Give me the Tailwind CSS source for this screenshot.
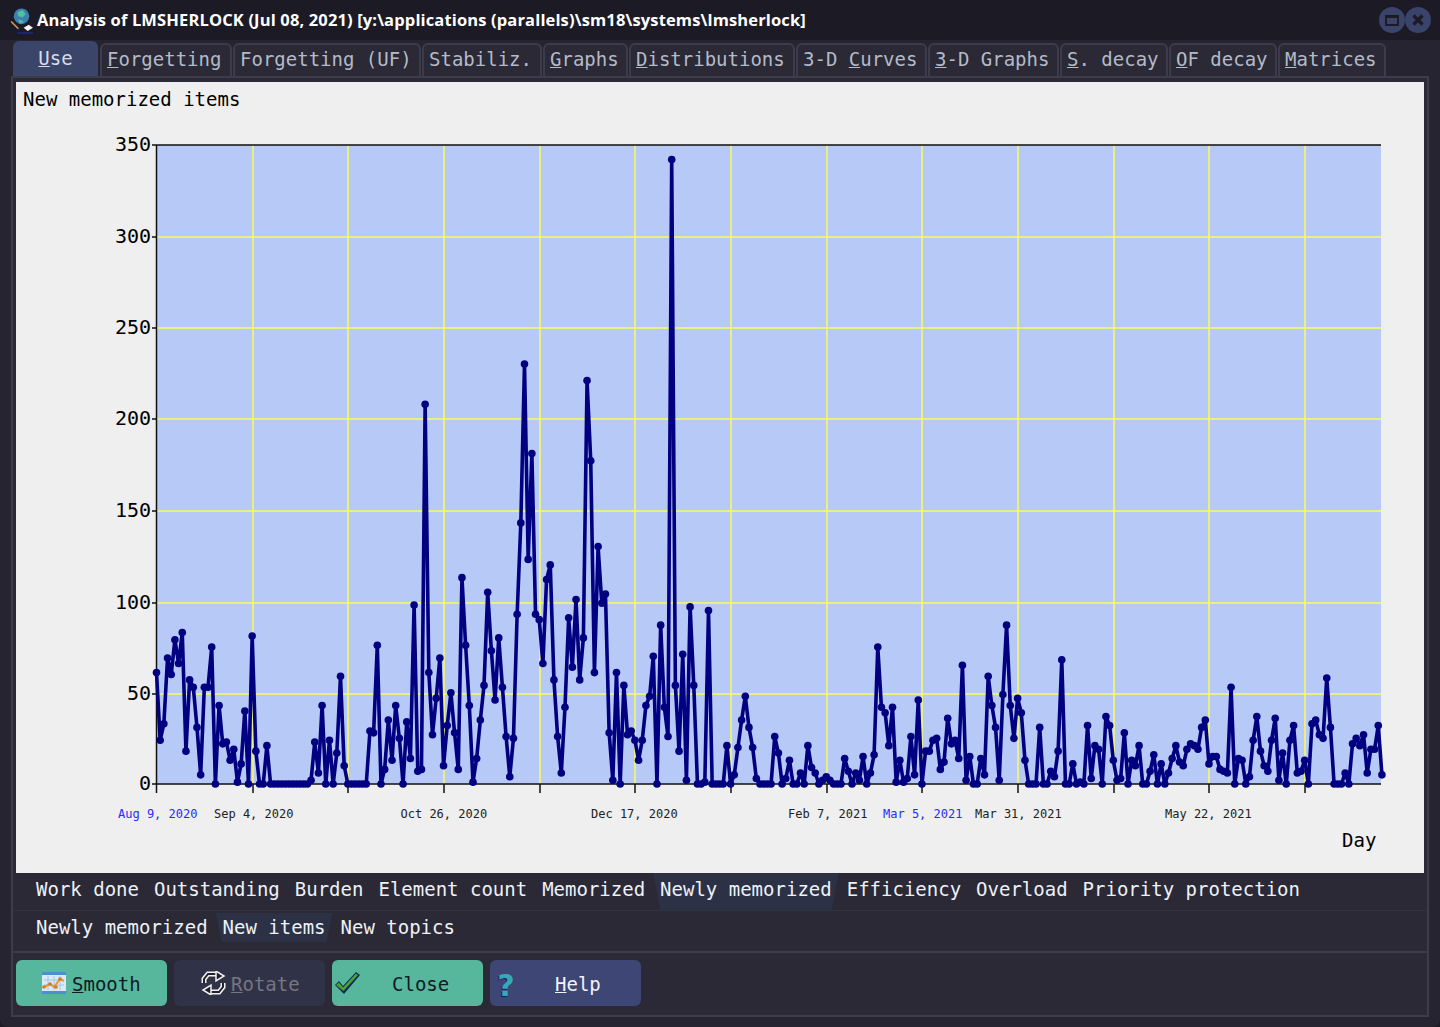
<!DOCTYPE html>
<html lang="en">
<head>
    <meta charset="UTF-8">
    <title>Analysis of LMSHERLOCK</title>
    <script src="https://cdn.jsdelivr.net/npm/@tailwindcss/browser@4"></script>
</head>
<body class="bg-[#1b1a25]">
<div class="w-[1440px] h-[1027px] flex flex-col overflow-hidden bg-[#1b1a25] font-['DejaVu_Sans_Mono',monospace] text-[19px] leading-none">

    <!-- Title bar -->
    <div class="h-[40px] shrink-0 flex items-center pl-[9px] pr-[9px]">
        <svg width="25" height="27" viewBox="0 0 24 26" class="shrink-0">
            <circle cx="12" cy="9" r="7.500" fill="#3f7fb0"/>
            <path d="M8 5l5-2 3 4-3 3-4-1zM9 12l4 1 1 2-4 1z" fill="#4fc0a0"/>
            <path d="M2 14l9 9" stroke="#1a1a40" stroke-width="3"/>
            <path d="M2 14l7 7" stroke="#d8a030" stroke-width="1.500"/>
            <path d="M14 20l5-3 4 3-5 3z" fill="#f4f4f4"/>
            <path d="M8 25h15" stroke="#1c2a80" stroke-width="1.500"/>
        </svg>
        <div class="ml-[3px] font-['Open_Sans',sans-serif] font-bold text-[16.500px] tracking-[0.14px] text-white whitespace-nowrap">Analysis of LMSHERLOCK (Jul 08, 2021) [y:\applications (parallels)\sm18\systems\lmsherlock]</div>
        <div class="ml-auto flex">
            <div class="w-[26px] h-[26px] rounded-full bg-[#3a4369] flex items-center justify-center">
                <div class="w-[14px] h-[11px] border-[2px] border-t-[3px] border-[#1b1a25]"></div>
            </div>
            <div class="w-[26px] h-[26px] rounded-full bg-[#3a4369] flex items-center justify-center">
                <svg width="14" height="14" viewBox="0 0 14 14"><path d="M2.500 2.500l9 9M11.500 2.500l-9 9" stroke="#1b1a25" stroke-width="3.200"/></svg>
            </div>
        </div>
    </div>

    <!-- Window body -->
    <div class="flex-1 flex flex-col bg-[#252430] px-[11px] rounded-b-lg">

        <!-- Tabs -->
        <div class="h-[36px] flex items-end pl-[2px] gap-[1px] text-[#b4bac8] shrink-0">
            <div class="w-[85px] h-[35px] rounded-t-md bg-[#3b4569] text-[#d8dcea] flex items-center justify-center"><span><u>U</u>se</span></div>
            <div class="w-[132px] ml-[1px] h-[33px] rounded-t-md bg-[#2a2935] border-2 border-b-0 border-[#3d3c4c] flex items-center pl-[5px] pb-[2px]"><span><u>F</u>orgetting</span></div>
            <div class="w-[188px] h-[33px] rounded-t-md bg-[#2a2935] border-2 border-b-0 border-[#3d3c4c] flex items-center pl-[5px] pb-[2px]"><span>Forgetting (UF)</span></div>
            <div class="w-[120px] h-[33px] rounded-t-md bg-[#2a2935] border-2 border-b-0 border-[#3d3c4c] flex items-center pl-[5px] pb-[2px]"><span>Stabiliz.</span></div>
            <div class="w-[85px] h-[33px] rounded-t-md bg-[#2a2935] border-2 border-b-0 border-[#3d3c4c] flex items-center pl-[5px] pb-[2px]"><span><u>G</u>raphs</span></div>
            <div class="w-[166px] h-[33px] rounded-t-md bg-[#2a2935] border-2 border-b-0 border-[#3d3c4c] flex items-center pl-[5px] pb-[2px]"><span><u>D</u>istributions</span></div>
            <div class="w-[131px] h-[33px] rounded-t-md bg-[#2a2935] border-2 border-b-0 border-[#3d3c4c] flex items-center pl-[5px] pb-[2px]"><span>3-D <u>C</u>urves</span></div>
            <div class="w-[131px] h-[33px] rounded-t-md bg-[#2a2935] border-2 border-b-0 border-[#3d3c4c] flex items-center pl-[5px] pb-[2px]"><span><u>3</u>-D Graphs</span></div>
            <div class="w-[108px] h-[33px] rounded-t-md bg-[#2a2935] border-2 border-b-0 border-[#3d3c4c] flex items-center pl-[5px] pb-[2px]"><span><u>S</u>. decay</span></div>
            <div class="w-[108px] h-[33px] rounded-t-md bg-[#2a2935] border-2 border-b-0 border-[#3d3c4c] flex items-center pl-[5px] pb-[2px]"><span><u>O</u>F decay</span></div>
            <div class="w-[108px] h-[33px] rounded-t-md bg-[#2a2935] border-2 border-b-0 border-[#3d3c4c] flex items-center pl-[5px] pb-[2px]"><span><u>M</u>atrices</span></div>
        </div>

        <div class="flex-1 flex flex-col bg-[#2a2935] border-x-2 border-b-2 border-[#3d3c4c]">
            <!-- Chart panel -->
            <div class="border-t-[2px] border-[#3d3c4c] pt-[4px] px-[3px] bg-[#2a2935]">
                <div class="h-[791px] bg-[#efefef] flex flex-col">
                    <div class="h-[32px] pl-[7px] pt-[8px] text-black shrink-0">New memorized items</div>
                    <svg id="chart" width="1408" height="759" viewBox="16 114 1408 759" class="block">
                        <rect x="157" y="145" width="1224" height="639" fill="#b7c9f7"/>
                        <g stroke="#fbfb5c" stroke-width="1.500">
                            <path d="M157 237H1381M157 328H1381M157 419H1381M157 511H1381M157 603H1381M157 694H1381"/>
                            <path d="M253 145V784M348 145V784M444 145V784M540 145V784M635 145V784M731 145V784M827 145V784M922 145V784M1018 145V784M1114 145V784M1209 145V784M1305 145V784"/>
                        </g>
                        <g stroke="#111" stroke-width="1.500" fill="none">
                            <path d="M152 145H1381M156.500 145V793M152 784H1381"/>
                            <path d="M152 237h5M152 328h5M152 419h5M152 511h5M152 603h5M152 694h5"/>
                            <path d="M253 784v9M348 784v9M444 784v9M540 784v9M635 784v9M731 784v9M827 784v9M922 784v9M1018 784v9M1114 784v9M1209 784v9M1305 784v9"/>
                        </g>
                        <polyline id="series" fill="none" stroke="#000080" stroke-width="3.600" stroke-linejoin="round"/>
                        <g id="dots" fill="#000080"></g>
                        <g font-family="DejaVu Sans Mono, monospace" font-size="20" fill="#000" text-anchor="end">
                            <text x="151" y="151">350</text>
                            <text x="151" y="243">300</text>
                            <text x="151" y="334">250</text>
                            <text x="151" y="425">200</text>
                            <text x="151" y="517">150</text>
                            <text x="151" y="609">100</text>
                            <text x="151" y="700">50</text>
                            <text x="151" y="790">0</text>
                        </g>
                        <g font-family="DejaVu Sans Mono, monospace" font-size="12" fill="#222">
                            <text x="118" y="818" fill="#2a2aff">Aug 9, 2020</text>
                            <text x="214" y="818">Sep 4, 2020</text>
                            <text x="400.500" y="818">Oct 26, 2020</text>
                            <text x="591" y="818">Dec 17, 2020</text>
                            <text x="788" y="818">Feb 7, 2021</text>
                            <text x="883" y="818" fill="#2a2aff">Mar 5, 2021</text>
                            <text x="975" y="818">Mar 31, 2021</text>
                            <text x="1165" y="818">May 22, 2021</text>
                        </g>
                        <text x="1342" y="847" font-family="DejaVu Sans Mono, monospace" font-size="19" fill="#000">Day</text>
                    </svg>
                </div>
            </div>

            <!-- Sub tabs -->
            <div class="h-[38px] flex items-center pb-[4px] pl-[23px] text-[#eef1f8] gap-[15px] border-b border-[#32313e]">
                <span>Work done</span><span>Outstanding</span><span>Burden</span><span>Element count</span><span>Memorized</span>
                <span class="-mx-[7px] px-[7px] h-[37px] -mb-[4px] pb-[4px] flex items-center bg-[#2c3145] [clip-path:polygon(0_0,100%_0,calc(100%-7px)_100%,7px_100%)]">Newly memorized</span>
                <span>Efficiency</span><span>Overload</span><span>Priority protection</span>
            </div>
            <div class="h-[42px] flex pt-[2px] pl-[23px] text-[#eef1f8] gap-[15px] border-b-[2px] border-[#3d3c4c]">
                <span class="h-[29px] flex items-center">Newly memorized</span>
                <span class="-mx-[7px] px-[7px] h-[29px] flex items-center bg-[#2c3145] [clip-path:polygon(0_0,100%_0,calc(100%-6px)_100%,6px_100%)]">New items</span>
                <span class="h-[29px] flex items-center">New topics</span>
            </div>

            <!-- Buttons -->
            <div class="flex-1 flex gap-[7px] pl-[3px] pt-[7px]">
                <div class="w-[151px] h-[46px] rounded-md bg-[#56b79c] flex items-center pl-[26px] pt-[2px] text-[#0f1a26]">
                    <svg width="24" height="22" viewBox="0 0 24 22" class="shrink-0 -mt-[2px]">
                        <rect width="24" height="22" fill="#d9e9f7"/>
                        <path d="M0 0h24v3H0zM0 19h24v3H0z" fill="#4a8fd0"/>
                        <path d="M6 4v14M12 4v14M18 4v14M2 8h20M2 13h20" stroke="#a9c4e4"/>
                        <path d="M2 15l6-3 4 3 6-8 4 2" fill="none" stroke="#e89a30" stroke-width="2"/>
                        <circle cx="2" cy="15" r="1.800" fill="#d07a20"/><circle cx="8" cy="12" r="1.800" fill="#d07a20"/><circle cx="14" cy="15" r="1.800" fill="#d07a20"/><circle cx="18" cy="7" r="1.800" fill="#d07a20"/>
                    </svg>
                    <span class="ml-[6px]"><u>S</u>mooth</span>
                </div>
                <div class="w-[151px] h-[46px] rounded-md bg-[#303248] flex items-center pl-[27px] pt-[2px] text-[#767680]">
                    <svg width="25" height="24" viewBox="0 0 25 24" class="shrink-0 -mt-[2px]">
                        <path d="M3 12V8L7 3h9M22 12v4l-4 5H9" fill="none" stroke="#f2f2f2" stroke-width="5"/>
                        <path d="M3 12V8L7 3h9M22 12v4l-4 5H9" fill="none" stroke="#23232f" stroke-width="2"/>
                        <path d="M15 0l8 5-8 5zM10 24l-8-5 8-5z" fill="#23232f" stroke="#f2f2f2" stroke-width="1.500"/>
                    </svg>
                    <span class="ml-[5px]"><u>R</u>otate</span>
                </div>
                <div class="w-[151px] h-[46px] rounded-md bg-[#56b79c] flex items-center pl-[3px] pt-[2px] text-[#0f1a26]">
                    <svg width="25" height="22" viewBox="0 0 25 22" class="shrink-0 -mt-[2px]">
                        <path d="M0 13l4-4 4 5L21 0l4 3L9 22z" fill="#16265f"/>
                        <path d="M1 13l3-2.500 4 5L21 1.500l2 1.500L8.500 19z" fill="#45a82a"/>
                    </svg>
                    <span class="ml-[32px]">Close</span>
                </div>
                <div class="w-[151px] h-[46px] rounded-md bg-[#3d4674] flex items-center pl-[7px] pt-[2px] text-[#f2f4fa]">
                    <span class="w-[18px] text-center font-['DejaVu_Sans',sans-serif] font-bold text-[30px] pt-[3px] text-[#3aa7b4] [text-shadow:-1px_1px_0_#12206a]">?</span>
                    <span class="ml-[40px]"><u>H</u>elp</span>
                </div>
            </div>
        </div>
        <div class="h-[10px] shrink-0"></div>
    </div>
</div>
<script>
    // daily counts, Aug 9 2020 to Jul 8 2021
    const values = [
        61,24,33,69,60,79,66,83,18,57, 53,31,5,53,53,75,0,43,22,23,
        13,19,1,11,40,0,81,18,0,0, 21,0,0,0,0,0,0,0,0,0,
        0,0,2,23,6,43,0,24,0,17, 59,10,0,0,0,0,0,0,29,28,
        76,0,8,35,13,43,25,0,34,14, 98,7,8,208,61,27,47,69,10,32,
        50,28,8,113,76,43,1,14,35,54, 105,73,46,80,53,26,4,25,93,143,
        230,123,181,93,90,66,112,120,57,26, 6,42,91,64,101,57,80,221,177,61,
        130,99,104,28,2,61,0,54,27,29, 24,13,24,43,48,70,0,87,42,26,
        342,54,18,71,2,97,54,0,0,1, 95,0,0,0,0,21,0,5,20,35,
        48,31,20,3,0,0,0,0,26,17, 0,3,13,0,0,6,0,21,9,6,
        0,2,4,2,0,0,0,14,7,0, 6,2,15,0,6,16,75,42,39,21,
        42,1,13,1,3,26,5,46,0,18, 18,24,25,8,12,36,22,24,14,65,
        2,15,0,0,14,5,59,43,31,2, 49,87,43,25,47,39,13,0,0,0,
        31,0,0,7,4,18,68,0,0,11, 0,1,0,32,3,21,19,0,37,32,
        13,2,3,28,0,13,10,21,0,0, 7,16,0,11,0,6,14,21,12,10,
        19,22,21,19,31,35,11,15,15,8, 7,6,53,0,14,13,0,4,24,37,
        18,10,7,24,36,2,17,0,24,32, 6,7,13,0,33,35,27,25,58,31,
        0,0,0,6,0,22,25,21,27,6, 19,19,32,5
    ];
    const svgNS = 'http://www.w3.org/2000/svg';
    const dots = document.getElementById('dots');
    const points = values.map((v, i) => {
        const x = 156.5 + 3.68 * i;
        const y = 784 - v * 1.826;
        const dot = document.createElementNS(svgNS, 'circle');
        dot.setAttribute('cx', x);
        dot.setAttribute('cy', y);
        dot.setAttribute('r', 3.8);
        dots.appendChild(dot);
        return x + ',' + y;
    });
    document.getElementById('series').setAttribute('points', points.join(' '));
</script>
</body>
</html>
